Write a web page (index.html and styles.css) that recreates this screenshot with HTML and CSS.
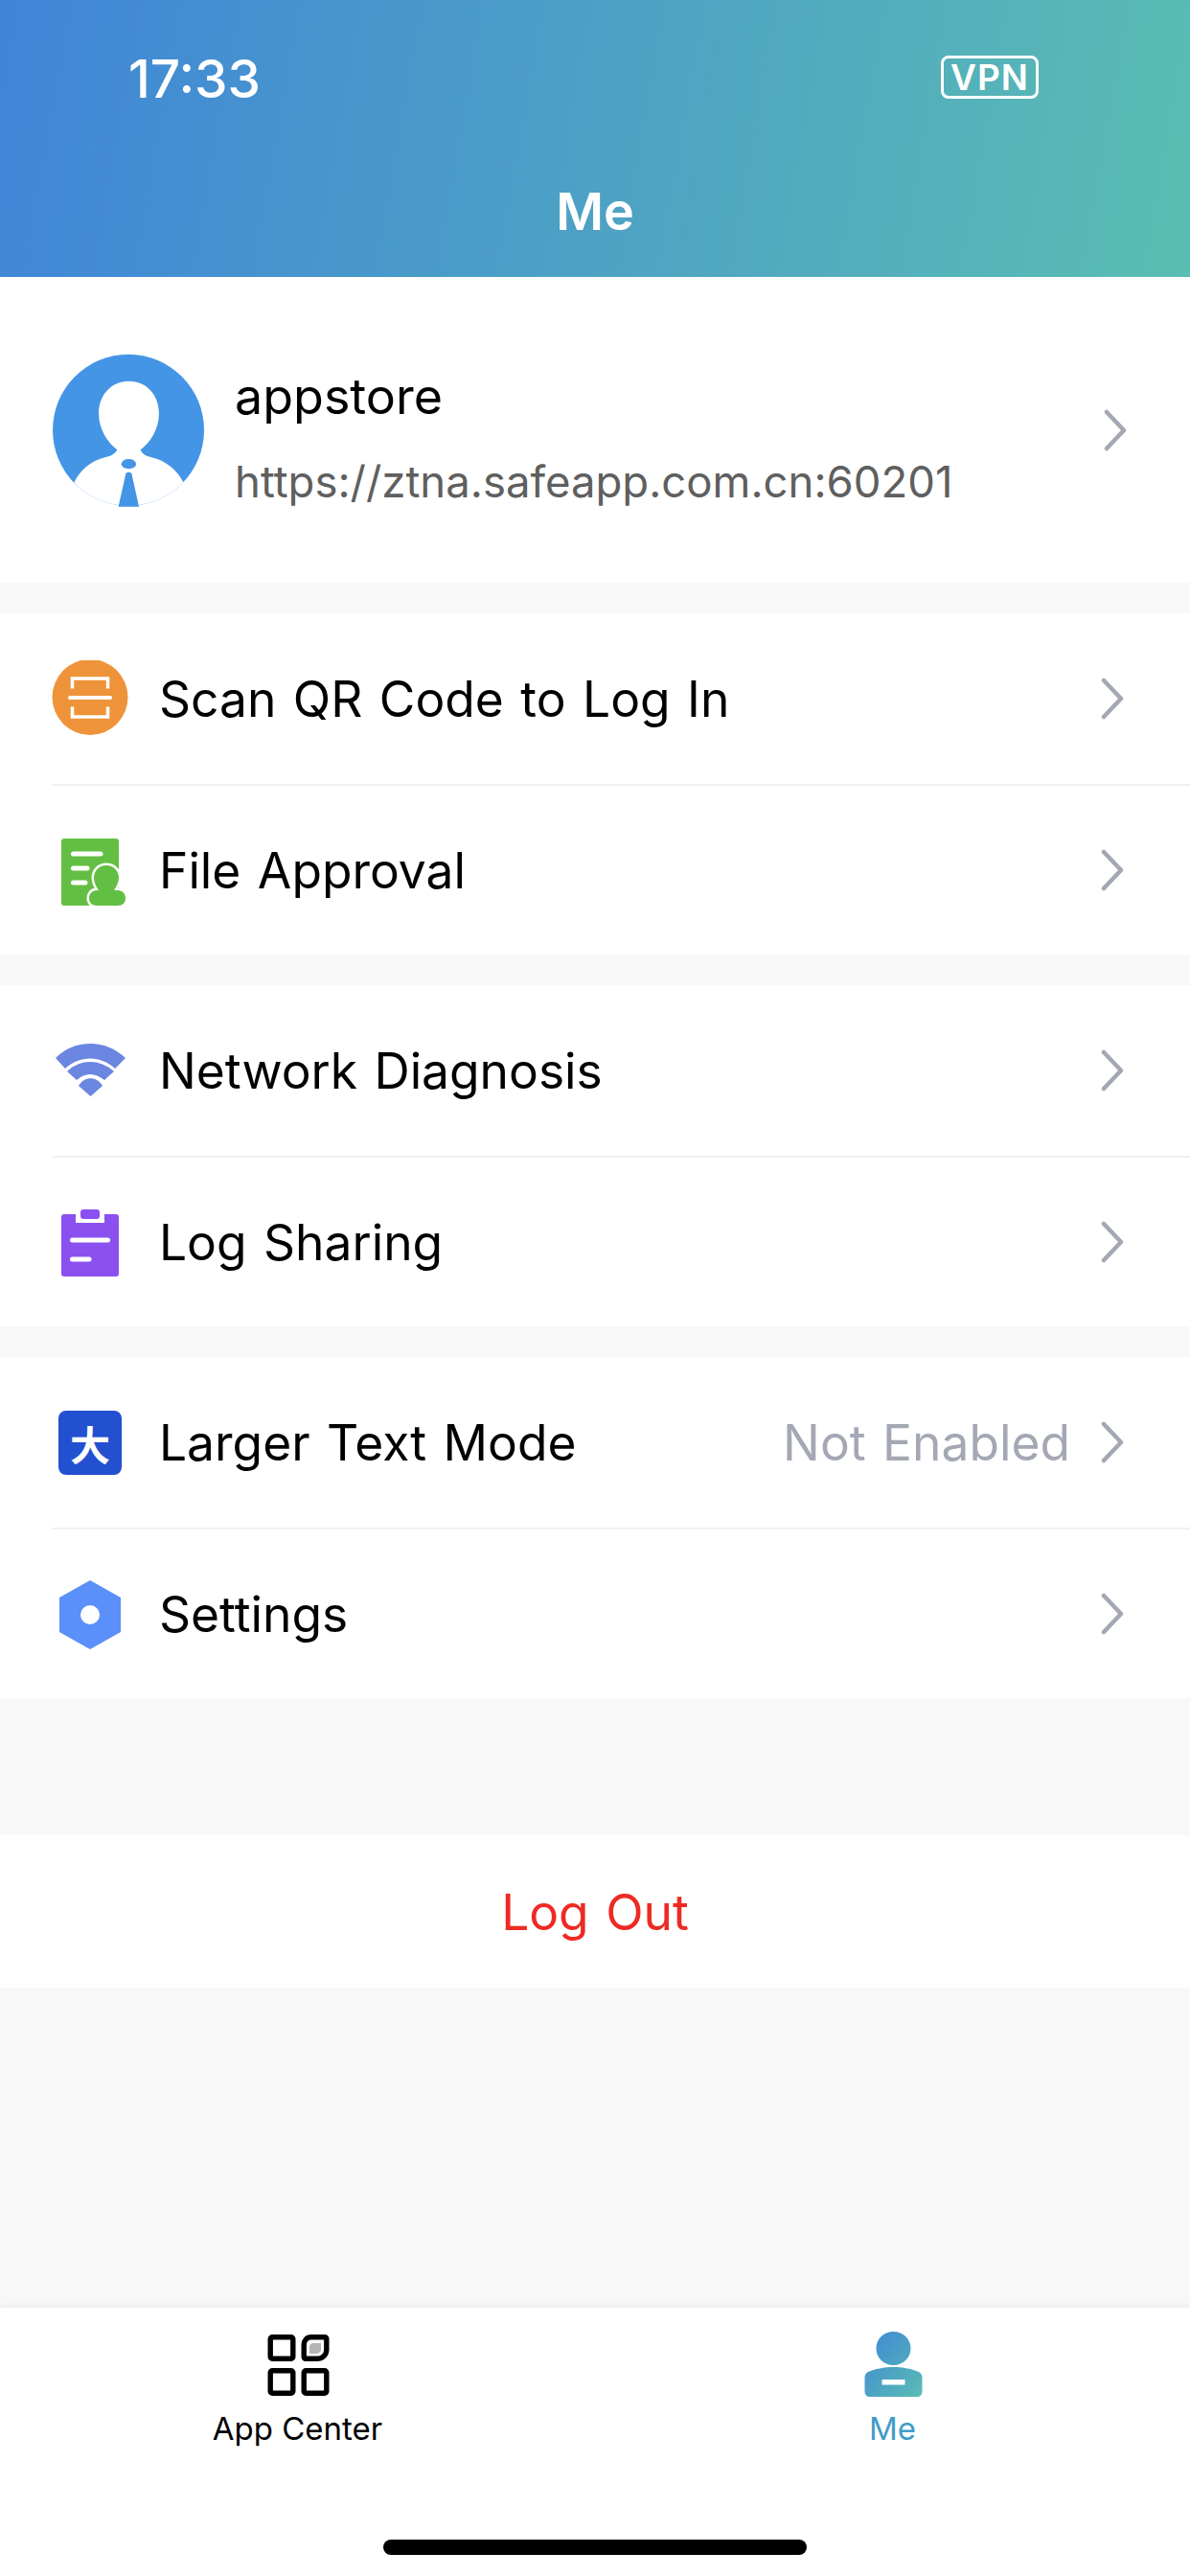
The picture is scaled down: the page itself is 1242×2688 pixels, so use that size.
FILE: index.html
```html
<!DOCTYPE html>
<html>
<head>
<meta name="viewport" content="width=device-width, initial-scale=1.0">
<link rel="stylesheet" href="styles.css">
</head>
<body>

<div class="page">

  <div class="top">
    <div class="status">
      <span class="time">17:33</span>
      <span class="vpn">VPN</span>
    </div>
    <div class="title">Me</div>
  </div>

  <div class="profile">
    <svg class="avatar" viewBox="45 60 470 475">
      <defs><clipPath id="avatarClip"><circle cx="280" cy="297" r="235"/></clipPath></defs>
      <circle cx="280" cy="297" r="235" fill="#4495e6"/>
      <path clip-path="url(#avatarClip)" fill="#fff" d="M282 145C225 145 188 190 188 245C188 295 215 335 245 358C238 372 225 378 205 382C165 392 130 420 112 458L112 570L450 570L450 458C432 420 395 392 355 382C335 378 322 372 318 358C348 335 375 295 375 245C375 190 338 145 282 145Z"/>
      <ellipse cx="281" cy="402" rx="23" ry="15" fill="#4495e6"/>
      <path fill="#4495e6" d="M272 432C276 426 286 426 290 432L313 535L249 535Z"/>
    </svg>
    <div class="who">
      <div class="name">appstore</div>
      <div class="url">https://ztna.safeapp.com.cn:60201</div>
    </div>
    <svg class="arrow" viewBox="0 0 24 44"><path d="M3 3L21 22L3 41"/></svg>
  </div>

  <div class="group">
    <div class="row">
      <span class="slot">
        <svg class="ico" width="80" height="80" viewBox="0 1.500 80 80">
          <circle cx="40" cy="40" r="39.500" fill="#ee933a"/>
          <path fill="none" stroke="#fff" stroke-width="3.500" d="M21.500 31V20.500H58.500V31M21.500 50V60.500H58.500V50"/>
          <path stroke="#fff" stroke-width="4" stroke-linecap="round" d="M19 40.500H61"/>
        </svg>
      </span>
      <span class="label">Scan QR Code to Log In</span>
      <svg class="arrow" viewBox="0 0 24 44"><path d="M3 3L21 22L3 41"/></svg>
    </div>
    <div class="row">
      <span class="slot">
        <svg class="ico" width="80" height="80" viewBox="0 0 80 80">
          <rect x="10" y="7" width="60" height="70" rx="3" fill="#63bf44"/>
          <path stroke="#fff" stroke-width="5" stroke-linecap="round" d="M22.500 23H51M22.500 38H37M22.500 53H35"/>
          <path fill="#63bf44" stroke="#fff" stroke-width="5" paint-order="stroke" d="M57 35C49 35 44 41 44 48C44 53 47 58 49 61H47C42 61 39 65 39 69C39 74 42 77 47 77H69C74 77 77 74 77 69C77 65 74 61 69 61H65C67 58 70 53 70 48C70 41 65 35 57 35Z"/>
        </svg>
      </span>
      <span class="label">File Approval</span>
      <svg class="arrow" viewBox="0 0 24 44"><path d="M3 3L21 22L3 41"/></svg>
    </div>
  </div>

  <div class="group">
    <div class="row">
      <span class="slot">
        <svg class="ico" width="80" height="80" viewBox="0 0 80 80">
          <path fill="#6a86e0" d="M4 27C24 7 56 7 77 27L66 38C51 24 29 24 14 38Z"/>
          <path fill="#6a86e0" d="M16 41C30 27.700 50 27.700 65 41L55 50C45 42 35 42 26 50Z"/>
          <path fill="#6a86e0" d="M28 56C34 45.500 47 45.500 53 56L40.500 67Z"/>
        </svg>
      </span>
      <span class="label">Network Diagnosis</span>
      <svg class="arrow" viewBox="0 0 24 44"><path d="M3 3L21 22L3 41"/></svg>
    </div>
    <div class="row">
      <span class="slot">
        <svg class="ico" width="80" height="80" viewBox="0 0 80 80">
          <path fill="#8b50f0" d="M13 11H25V20H55V11H67C69 11 70 12 70 14V73C70 75 69 76 67 76H13C11 76 10 75 10 73V14C10 12 11 11 13 11Z"/>
          <rect x="30" y="6" width="20" height="10" rx="3" fill="#8b50f0"/>
          <path stroke="#fff" stroke-width="5" stroke-linecap="round" d="M21.500 38H58.500M21.500 58H39"/>
        </svg>
      </span>
      <span class="label">Log Sharing</span>
      <svg class="arrow" viewBox="0 0 24 44"><path d="M3 3L21 22L3 41"/></svg>
    </div>
  </div>

  <div class="group">
    <div class="row">
      <span class="slot"><span class="da">大</span></span>
      <span class="label">Larger Text Mode</span>
      <span class="value">Not Enabled</span>
      <svg class="arrow" viewBox="0 0 24 44"><path d="M3 3L21 22L3 41"/></svg>
    </div>
    <div class="row">
      <span class="slot">
        <svg class="ico" width="80" height="80" viewBox="0 0 80 80">
          <path fill="#5b8ff9" fill-rule="evenodd" d="M40 5L72 23V59L40 77L8 59V23ZM40 31A10 10 0 1 0 40 51A10 10 0 1 0 40 31Z"/>
        </svg>
      </span>
      <span class="label">Settings</span>
      <svg class="arrow" viewBox="0 0 24 44"><path d="M3 3L21 22L3 41"/></svg>
    </div>
  </div>

  <div class="logout">Log Out</div>

  <div class="filler"></div>

  <div class="tabbar">
    <div class="tabs">
      <div class="tab">
        <svg width="66" height="70" viewBox="0 0 66 70">
          <g fill="none" stroke="#000" stroke-width="5.400">
            <rect x="4.200" y="5.700" width="23.600" height="22.600" rx="2"/>
            <rect x="4.200" y="40.700" width="23.600" height="23.600" rx="2"/>
            <rect x="39.200" y="40.700" width="23.600" height="23.600" rx="2"/>
            <path d="M47 5.700H61C62 5.700 62.800 6.500 62.800 7.500V19C62.800 24.500 58 28.300 53 28.300H41C40 28.300 39.200 27.500 39.200 26.500V14C39.200 9 42 5.700 47 5.700Z"/>
          </g>
          <path fill="#b4b4b4" d="M49 12H57V19C57 21.500 54 23 51 23H45V16C45 13.500 46.500 12 49 12Z"/>
        </svg>
        <span class="tab-name">App Center</span>
      </div>
      <div class="tab tab-on">
        <svg width="66" height="70" viewBox="0 0 66 70">
          <defs><linearGradient id="meGrad" x1="0" y1="0" x2="1" y2="1"><stop offset="0" stop-color="#3f87d6"/><stop offset="1" stop-color="#5abcb3"/></linearGradient></defs>
          <path fill="url(#meGrad)" fill-rule="evenodd" d="M33.500 0C44 0 51.500 8 51.500 17.500C51.500 27 44 35 33.500 35C23 35 15.500 27 15.500 17.500C15.500 8 23 0 33.500 0ZM33.500 37C43 37 53 39 60 42C62 43 63.500 45 63.500 48V62C63.500 66 61 68 58 68H9C6 68 3.500 66 3.500 62V48C3.500 45 5 43 7 42C14 39 24 37 33.500 37ZM21.500 50V55.500H45.500V50Z"/>
        </svg>
        <span class="tab-name">Me</span>
      </div>
    </div>
    <div class="home-bar"></div>
  </div>

</div>

</body>
</html>
```

FILE: styles.css
```css
* {
  box-sizing: border-box;
}

body {
  margin: 0;
  font: 51.500px Inter, "Noto Sans CJK SC", sans-serif;
  word-spacing: 3px;
  color: #000;
}

.page {
  width: 1242px;
  height: 2688px;
  display: flex;
  flex-direction: column;
  background-color: #f8f8f8;
}

/* header */
.top {
  height: 289px;
  padding: 54px 158px 0 134px;
  background: linear-gradient(100deg, #3f85d8, #5bbdb2);
  color: #fff;
}

.status {
  height: 56px;
  display: flex;
  align-items: center;
  justify-content: space-between;
}

.time {
  font-size: 55px;
  font-weight: 500;
}

.vpn {
  width: 102px;
  height: 45px;
  margin-bottom: 3px;
  border: 3px solid #fff;
  border-radius: 8px;
  display: flex;
  align-items: center;
  justify-content: center;
  font-size: 37px;
  font-weight: 600;
  letter-spacing: 1px;
}

.title {
  margin: 83px -158px 0 -134px;
  text-align: center;
  font-size: 54px;
  font-weight: 600;
  line-height: 56px;
}

/* profile */
.profile {
  height: 319px;
  margin-bottom: 32px;
  padding: 0 66px 0 55px;
  display: flex;
  align-items: center;
  background-color: #fff;
}

.avatar {
  width: 158px;
  height: 160px;
  flex: none;
}

.who {
  flex: 1;
  margin-left: 32px;
  padding-top: 16px;
}

.name {
  font-size: 52px;
  line-height: 60px;
}

.url {
  margin-top: 32px;
  font-size: 45.500px;
  line-height: 54px;
  color: #5f5f5f;
}

.arrow {
  width: 24px;
  height: 44px;
  flex: none;
  fill: none;
  stroke: #a4a8b4;
  stroke-width: 4.500;
  stroke-linecap: round;
  stroke-linejoin: round;
}

/* list groups */
.group {
  margin-bottom: 32px;
  background-color: #fff;
}

.group:nth-of-type(5) {
  margin-bottom: 143px;
}

.row {
  height: 178px;
  margin-left: 54px;
  padding-right: 69px;
  display: flex;
  align-items: center;
}

.row + .row {
  border-top: 2px solid #f0f0f5;
}

.slot {
  width: 80px;
  margin-right: 32px;
  display: flex;
  justify-content: center;
  flex: none;
}

.ico {
  display: block;
}

.label {
  flex: 1;
}

.value {
  margin-right: 32px;
  color: #a4a8b4;
}

.da {
  width: 66px;
  height: 67px;
  border-radius: 8px;
  display: flex;
  align-items: center;
  justify-content: center;
  background-color: #2350d0;
  color: #fff;
  font-size: 42px;
  font-weight: 700;
}

/* log out */
.logout {
  height: 159px;
  display: flex;
  align-items: center;
  justify-content: center;
  background-color: #fff;
  color: #ee2a24;
}

.filler {
  flex: 1;
}

/* tab bar */
.tabbar {
  height: 280px;
  display: flex;
  flex-direction: column;
  background-color: #fff;
  box-shadow: 0 -2px 6px rgba(0, 0, 0, 0.06);
}

.tabs {
  display: flex;
  padding-top: 25px;
}

.tab {
  flex: 1;
  display: flex;
  flex-direction: column;
  align-items: center;
  height: 217px;
}

.tab svg {
  display: block;
}

.tab-name {
  margin-top: 12px;
  font-size: 33px;
  line-height: 38px;
  word-spacing: 0;
}

.tab-on {
  color: #3f9cc8;
}

.home-bar {
  width: 442px;
  height: 16px;
  margin: 0 auto;
  border-radius: 8px;
  background-color: #000;
}
```
